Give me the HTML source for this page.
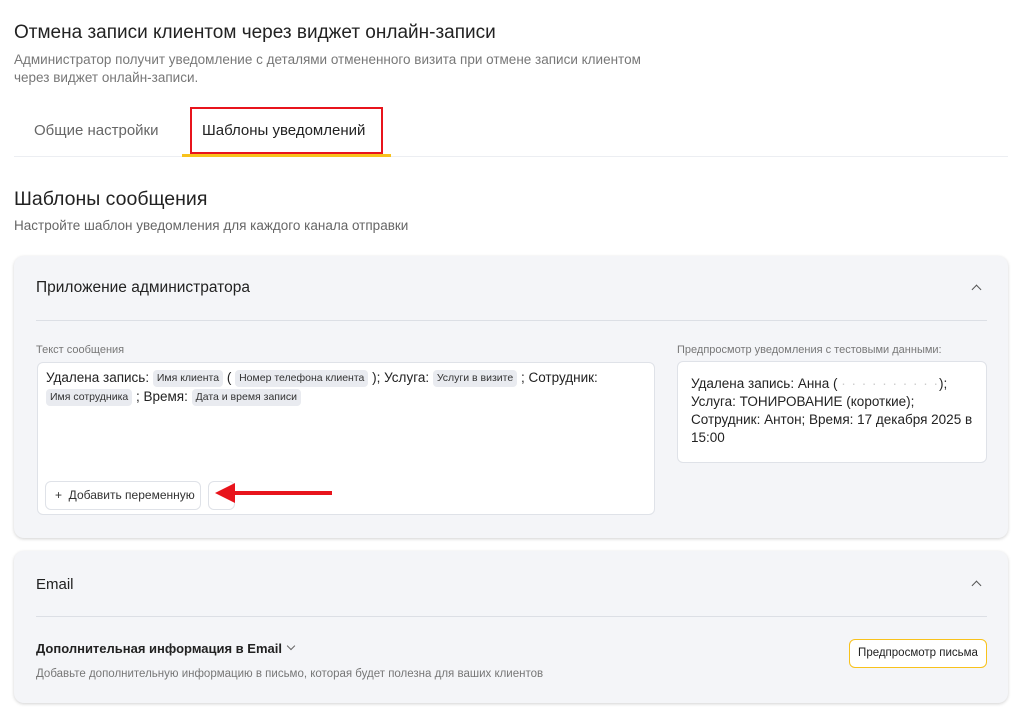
<!DOCTYPE html>
<html><head><meta charset="utf-8"><style>
*{margin:0;padding:0;box-sizing:border-box}
body{width:1024px;height:718px;background:#fff;font-family:"Liberation Sans",sans-serif;color:#222;position:relative;overflow:hidden}
.a{position:absolute;white-space:nowrap}
.card{position:absolute;left:14px;width:994px;background:#f4f5f8;border-radius:10px;box-shadow:0 1px 3px rgba(0,0,0,.18)}
.chip{display:inline-block;background:#e9ebf0;border-radius:4px;font-size:10.5px;padding:2px 4px;line-height:13px;color:#333;vertical-align:1px}
.chev{position:absolute;width:7px;height:7px;border-left:1.3px solid #555;border-top:1.3px solid #555;transform:rotate(45deg)}
</style></head><body>
<div class="a" style="left:14px;top:22px;font-size:19px;color:#222">Отмена записи клиентом через виджет онлайн-записи</div>
<div class="a" style="left:14px;top:51px;font-size:13.5px;color:#777;line-height:18px;white-space:normal;width:680px">Администратор получит уведомление с деталями отмененного визита при отмене записи клиентом<br>через виджет онлайн-записи.</div>
<div class="a" style="left:34px;top:122px;font-size:15px;color:#666">Общие настройки</div>
<div class="a" style="left:202px;top:122px;font-size:15px;color:#222">Шаблоны уведомлений</div>
<div class="a" style="left:190px;top:107px;width:193px;height:47px;border:2px solid #e8141c"></div>
<div class="a" style="left:14px;top:156px;width:994px;height:1px;background:#eceef2"></div>
<div class="a" style="left:182px;top:154px;width:209px;height:3px;background:#f8c21c"></div>
<div class="a" style="left:14px;top:188px;font-size:19.5px;color:#222">Шаблоны сообщения</div>
<div class="a" style="left:14px;top:218px;font-size:13.5px;color:#666">Настройте шаблон уведомления для каждого канала отправки</div>

<div class="card" style="top:256px;height:282px"></div>
<div class="a" style="left:36px;top:279px;font-size:15.5px;color:#222">Приложение администратора</div>
<div class="chev" style="left:973px;top:286px"></div>
<div class="a" style="left:36px;top:320px;width:951px;height:1px;background:#dcdfe5"></div>
<div class="a" style="left:36px;top:344px;font-size:11px;color:#777">Текст сообщения</div>
<div class="a" style="left:37px;top:362px;width:618px;height:153px;background:#fff;border:1px solid #dfe2e8;border-radius:6px"></div>
<div class="a" style="left:46px;top:368px;font-size:13.5px;line-height:19px;white-space:normal;width:605px">Удалена запись: <span class="chip">Имя клиента</span> ( <span class="chip">Номер телефона клиента</span> ); Услуга: <span class="chip">Услуги в визите</span> ; Сотрудник:<br><span class="chip">Имя сотрудника</span> ; Время: <span class="chip">Дата и время записи</span></div>
<div class="a" style="left:45px;top:481px;width:156px;height:29px;border:1px solid #dfe2e8;border-radius:6px;background:#fff;font-size:12px;line-height:27px;padding-left:9px;color:#333">+&nbsp; Добавить переменную</div>
<div class="a" style="left:208px;top:481px;width:27px;height:29px;border:1px solid #dfe2e8;border-radius:6px;background:#fff"></div>
<svg class="a" style="left:210px;top:481px" width="125" height="26"><rect x="20" y="10" width="102" height="4" fill="#e8141c"/><polygon points="5,12 25,2 25,22" fill="#e8141c"/></svg>
<div class="a" style="left:677px;top:344px;font-size:11px;color:#777">Предпросмотр уведомления с тестовыми данными:</div>
<div class="a" style="left:677px;top:361px;width:310px;height:102px;background:#fff;border:1px solid #dfe2e8;border-radius:6px"></div>
<div class="a" style="left:691px;top:375px;font-size:13.5px;line-height:18px;white-space:normal;width:296px">Удалена запись: Анна ( <span style="color:#ccc;letter-spacing:1px">· · · · · · · · · ·</span>);<br>Услуга: ТОНИРОВАНИЕ (короткие);<br>Сотрудник: Антон; Время: 17 декабря 2025 в<br>15:00</div>

<div class="card" style="top:551px;height:152px"></div>
<div class="a" style="left:36px;top:576px;font-size:15px;color:#222">Email</div>
<div class="chev" style="left:973px;top:582px"></div>
<div class="a" style="left:36px;top:616px;width:951px;height:1px;background:#dcdfe5"></div>
<div class="a" style="left:36px;top:641px;font-size:13px;font-weight:bold;color:#222">Дополнительная информация в Email</div>
<div class="a" style="left:288px;top:643px;width:6px;height:6px;border-right:1.2px solid #666;border-bottom:1.2px solid #666;transform:rotate(45deg)"></div>
<div class="a" style="left:36px;top:668px;font-size:11.5px;color:#777">Добавьте дополнительную информацию в письмо, которая будет полезна для ваших клиентов</div>
<div class="a" style="left:849px;top:639px;width:138px;height:29px;border:1.5px solid #f8c21c;border-radius:6px;background:#fff;font-size:11.5px;line-height:26px;text-align:center;color:#222">Предпросмотр письма</div>
</body></html>
